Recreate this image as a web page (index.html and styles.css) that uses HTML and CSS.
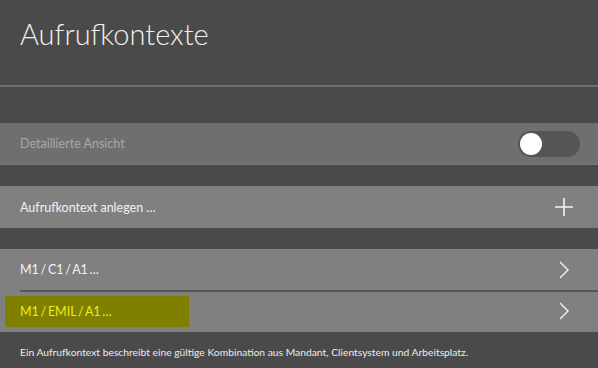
FILE: index.html
```html
<!DOCTYPE HTML>
<html>
<head>
    <meta charset="utf-8" />
    <title>Aufrufkontexte</title>
    <link rel="stylesheet" href="styles.css">
</head>
<body>

<div class="page">
    <header class="page-head">
        <h1 class="page-title">Aufrufkontexte</h1>
    </header>

    <div class="row row-toggle">
        <span class="row-label dim">Detaillierte Ansicht</span>
        <span class="switch"><span class="switch-knob"></span></span>
    </div>

    <div class="row row-add">
        <span class="row-label">Aufrufkontext anlegen …</span>
        <svg class="icon-plus" width="20" height="20" viewBox="0 0 20 20">
            <path d="M10 1v18M1 10h18" stroke="#f2f2f2" stroke-width="1.6" fill="none" />
        </svg>
    </div>

    <div class="list">
        <div class="row row-item">
            <span class="row-label path">M1 / C1 / A1 …</span>
            <svg class="icon-chevron" width="10" height="18" viewBox="0 0 10 18">
                <path d="M1 1l8 8-8 8" stroke="#f2f2f2" stroke-width="1.4" fill="none" />
            </svg>
        </div>
        <div class="row row-item">
            <span class="row-label path marked">M1 / EMIL / A1 …</span>
            <svg class="icon-chevron" width="10" height="18" viewBox="0 0 10 18">
                <path d="M1 1l8 8-8 8" stroke="#f2f2f2" stroke-width="1.4" fill="none" />
            </svg>
        </div>
    </div>

    <footer class="page-foot">Ein Aufrufkontext beschreibt eine gültige Kombination aus Mandant, Clientsystem und Arbeitsplatz.</footer>
</div>

</body>
</html>
```

FILE: styles.css
```css
body, html {
    margin: 0;
    padding: 0;
    width: 100%;
    height: 100%;
    overflow: hidden;
    background-color: #4a4a4a;
    font-family: Lato, "Open Sans", sans-serif;
}
.page {
    width: 100%;
}
.page-head {
    height: 87px;
    border-bottom: 2px solid #6e6e6e;
    padding: 0 20px;
    box-sizing: border-box;
}
.page-title {
    margin: 0;
    padding-top: 17px;
    font-size: 29px;
    font-weight: 300;
    color: #f0f0f0;
    line-height: 34px;
}
.row {
    display: flex;
    align-items: center;
    justify-content: space-between;
    height: 42px;
    padding: 0 18px 0 20px;
    box-sizing: border-box;
    background-color: #808080;
}
.row-label {
    font-size: 12.5px;
    color: #f2f2f2;
}
.row-label.dim {
    color: #a9a9a9;
}
.row-label.path {
    word-spacing: -1.5px;
}
.row-toggle {
    margin-top: 36px;
    background-color: #6f6f6f;
    border-bottom: 1px solid #777;
}
.row-add {
    margin-top: 21px;
}
.switch {
    width: 62px;
    height: 26px;
    border-radius: 13px;
    background-color: #565656;
    display: flex;
    align-items: center;
    padding-left: 2px;
    box-sizing: border-box;
}
.switch-knob {
    width: 22px;
    height: 22px;
    border-radius: 50%;
    background-color: #fff;
}
.icon-plus {
    margin-right: 6px;
}
.icon-chevron {
    margin-right: 11px;
}
.list {
    margin-top: 21px;
}
.row-item {
    height: 41px;
}
.row-item + .row-item {
    position: relative;
    height: 42px;
}
.row-item + .row-item::before {
    content: "";
    position: absolute;
    left: 20px;
    right: 0;
    top: 0;
    border-top: 2px solid #555;
}
.marked {
    margin-left: -15px;
    width: 184px;
    padding-left: 15px;
    box-sizing: border-box;
    line-height: 31px;
    background-color: #808000;
    color: #ecec1a;
}
.page-foot {
    padding: 14px 20px 0;
    font-size: 10.3px;
    color: #ececec;
}
```
